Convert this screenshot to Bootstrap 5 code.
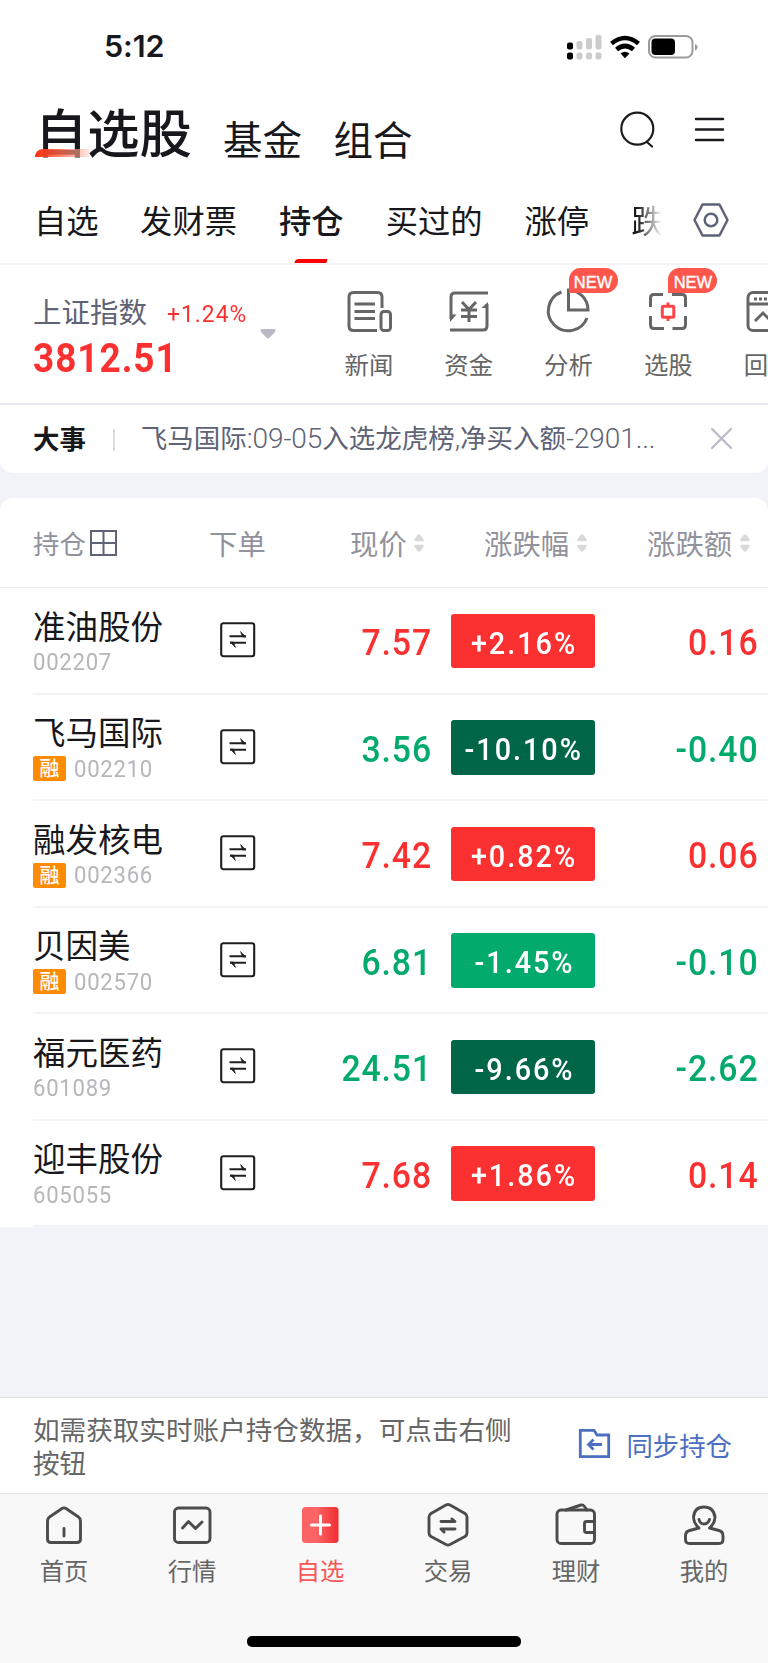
<!DOCTYPE html>
<html lang="zh-CN">
<head>
<meta charset="utf-8">
<meta name="viewport" content="width=device-width, initial-scale=1">
<title>自选股</title>
<link href="https://cdn.jsdelivr.net/npm/bootstrap@5.3.0/dist/css/bootstrap.min.css" rel="stylesheet">
<style>
  :root { --up:#fb3030; --down:#02aa6b; --deep:#006647; --ink:#18181c; --slate:#606375; --haze:#f2f3f8; }
  body { font-family:"Noto Sans CJK SC",sans-serif; background:var(--haze); color:var(--ink); width:768px; height:1663px; overflow:hidden; line-height:1; }
  svg { display:block; flex:none; fill:none; overflow:visible; }
  .num { font-family:Roboto,sans-serif; }
  .status { height:94px; padding:0 70px 0 104px; }
  .clock { font:600 30.5px/1 Inter,sans-serif; letter-spacing:-.1px; margin-top:-1px; }
  .titles { height:90px; padding:0 43px 0 35px; }
  .title-main { font-size:52.3px; font-weight:500; line-height:60px; }
  .title-main::before { content:""; position:absolute; left:0; top:49px; width:54px; height:8px; border-radius:8px 0 0 0; background:linear-gradient(90deg,#fa2c08,#ff6b50cc 50%,#ffd5cd88); z-index:1; }
  .title-sub { font-size:39.5px; line-height:46px; }
  .tabs { height:81px; padding:0 39px 0 34px; border-bottom:2px solid var(--haze); font-size:32.3px; }
  .tabs .on::after { content:""; position:absolute; left:16px; top:75px; width:32px; height:4px; background:red; border-radius:3px 1px 0 0; transform:skewX(-18deg); }
  .tab { height:79px; line-height:71px; white-space:nowrap; }
  .fade-tab { width:31px; overflow:hidden; -webkit-mask-image:linear-gradient(90deg,#000 20%,transparent); mask-image:linear-gradient(90deg,#000 20%,transparent); }
  .index-bar { height:140px; border-bottom:2px solid #e9e9f0; }
  .index-box { width:286px; padding:29px 0 0 33px; color:var(--slate); }
  .index-name { font-size:28.5px; line-height:34px; }
  .index-pct { font-size:24.8px; line-height:29px; color:var(--up); letter-spacing:1.1px; transform:scaleX(.92); transform-origin:left; }
  .index-val { font-size:41px; font-weight:700; line-height:44px; letter-spacing:1.1px; color:var(--up); margin-top:8px; transform:scaleX(.9); transform-origin:left; }
  .tool { width:99.8px; flex:none; padding-top:21px; color:#666; font-size:24.4px; }
  .tool svg { stroke:#666; stroke-width:3; }
  .tool div { margin-top:11px; line-height:34px; white-space:nowrap; }
  .new-tag { position:absolute; left:50px; top:3px; width:49px; height:25px; border-radius:12px 13px 13px 0; background:#ff564c; color:#fff; font:500 16.5px/28px "Liberation Sans",sans-serif; -webkit-text-stroke:.4px #fff; text-align:center; z-index:2; }
  .news { height:68px; padding:0 36px 2px 33px; border-radius:0 0 13px 13px; }
  .news strong { font-size:26.4px; font-weight:700; }
  .news .bar-v { width:2px; height:22px; background:#dcdce2; margin:3px 26px 0 27px; }
  .news-text { font-size:26.5px; color:var(--slate); width:545px; white-space:nowrap; }
  .news-text .num { font-size:28px; font-weight:300; letter-spacing:-.1px; }
  .holdings { margin-top:25px; border-radius:13px 13px 0 0; }
  .grid-row { display:grid; align-items:center; }
  .heads { height:90px; border-bottom:1px solid #e9e9ec; color:#92929d; font-size:28.4px; padding:1px 0 0 33px; }
  .heads.grid-row { grid-template-columns:176px 141px 134px 163px 145px; }
  .stock { height:106.5px; margin-left:33px; border-bottom:2px solid var(--haze); width:735px; grid-template-columns:187px 67px 144px 20px 144px 161px; }
  .stock-name { font-size:32.5px; line-height:38px; white-space:nowrap; margin-top:1px; }
  .code-line { height:27px; margin-top:5px; align-items:center; }
  .code { font-size:24.6px; line-height:28px; color:#b6b6bb; letter-spacing:.8px; transform:scaleX(.9); transform-origin:left; }
  .rong { width:33px; height:25px; background:#ff8b00; border-radius:2px; color:#fff; font-size:20px; font-weight:500; line-height:23px; text-align:center; margin-right:8px; }
  .price { font-size:37.5px; font-weight:500; letter-spacing:1px; text-align:right; padding-top:4px; line-height:44px; transform:scaleX(.9); transform-origin:right; margin-right:-1px; }
  .price.change { grid-column:6; margin-right:-2.5px; }
  .pill { grid-column:5; height:54.5px; line-height:59px; border-radius:3px; color:#fff; font-size:32px; font-weight:500; text-align:center; margin-top:1.5px; }
  .pill span { display:inline-block; letter-spacing:2.2px; margin-right:-2.2px; transform:scaleX(.9); white-space:nowrap; }
  .up { color:var(--up); } .down { color:var(--down); }
  .bg-up { background:var(--up); } .bg-down { background:var(--down); } .bg-deep { background:var(--deep); }
  .sync { height:96px; border-top:1px solid #e4e4e8; padding:0 36px 1px 33px; color:#666; font-size:26.6px; line-height:33.5px; }
  .sync-link { color:#4c6fbf; font-size:26.4px; }
  .dock { height:170px; background:#f8f8f8; border-top:1px solid #e2e2e4; }
  .dock-item { width:128px; padding-top:9px; color:#666; font-size:24.3px; }
  .dock-item svg { stroke:#4c4c4c; stroke-width:2.9; stroke-linejoin:round; stroke-linecap:round; }
  .dock-item div { line-height:34px; margin-top:4px; }
  .home-bar { width:274px; height:10.5px; border-radius:5px; background:#000; margin:49px auto 0; }
</style>
</head>
<body class="d-flex flex-column">
<svg width="0" height="0" class="position-absolute">
  <symbol id="swap" viewBox="0 0 36 36"><rect x="1.2" y="1.2" width="33" height="33" rx="2.2" stroke="#202024" stroke-width="2.1"/><path d="M9.500 14.300H26M10 20.800H26" stroke="#202024" stroke-width="2.100"/><path d="M20.500 9.500L26 15H22.500ZM15.500 25.500L10 20H13.500Z" fill="#202024" stroke="#202024" stroke-width=".6"/></symbol>
  <symbol id="sort" viewBox="0 0 10 18"><path d="M1 7.2Q-.4 6 .8 4.7L3.4 1.2Q5 -.6 6.600 1.200L9.200 4.700Q10.400 6 9 7.200ZM1 10.800Q-.4 12 .8 13.300L3.400 16.800Q5 18.600 6.600 16.800L9.200 13.300Q10.400 12 9 10.800Z" fill="#d9d9d9"/></symbol>
</svg>

<header class="bg-white">
  <div class="status d-flex align-items-center justify-content-between">
    <span class="clock">5:12</span>
    <svg width="131" height="26" viewBox="0 0 131 26">
      <g fill="#000"><rect x="0" y="8.500" width="6" height="7" rx="2"/><rect x="0" y="18.500" width="6" height="7" rx="2"/></g>
      <g fill="#ccc"><rect x="9.500" y="7" width="6" height="8.500" rx="2"/><rect x="19" y="4" width="6" height="11.500" rx="2"/><rect x="28.500" y="1" width="6" height="14.500" rx="2"/><rect x="9.500" y="18.500" width="6" height="7" rx="2"/><rect x="19" y="18.500" width="6" height="7" rx="2"/><rect x="28.500" y="18.500" width="6" height="7" rx="2"/></g>
      <path d="M44.500 9.500Q58 -1.500 71.500 9.500M49.500 15.500Q58 8.500 66.500 15.500" stroke="#000" stroke-width="4.600"/><path d="M53.500 19.500Q58 16 62.500 19.500L58 24.300Z" fill="#000"/>
      <rect x="82" y="2" width="43.500" height="21.500" rx="6.500" stroke="#9a9a9a" stroke-width="2"/><rect x="84.500" y="4.500" width="23.500" height="16.500" rx="4" fill="#000"/><path d="M128 10Q130.500 11 130.500 13.200T128 16.500Z" fill="#999"/>
    </svg>
  </div>
  <div class="titles d-flex">
    <div class="title-main position-relative" style="margin-top:5.500px">自选股</div>
    <div class="title-sub" style="margin:21px 0 0 31px">基金</div>
    <div class="title-sub" style="margin:21px 0 0 31.500px">组合</div>
    <svg class="ms-auto" style="margin-top:17px" width="36" height="38" viewBox="0 0 36 38" stroke="#1c1c20" stroke-width="2.200" stroke-linecap="round"><circle cx="17.300" cy="17.700" r="16"/><path d="M27 31L32 35.500"/></svg>
    <svg style="margin:23px 0 0 38px" width="31" height="26" viewBox="0 0 31 26" stroke="#1c1c20" stroke-width="2.500" stroke-linecap="round"><path d="M2 2H29M2 12.500H29M2 23H29"/></svg>
  </div>
  <nav class="tabs d-flex">
    <div class="tab">自选</div><div class="tab" style="margin-left:41.500px">发财票</div><div class="tab on position-relative" style="margin-left:42px;font-weight:500">持仓</div><div class="tab" style="margin-left:42px">买过的</div><div class="tab" style="margin-left:42px">涨停</div><div class="tab fade-tab" style="margin-left:42px">跌停</div>
    <svg class="ms-auto" style="margin-top:19px" width="36" height="34" viewBox="0 0 36 34" stroke="#606375" stroke-width="2.500" stroke-linejoin="round"><path d="M9.500 1.500H26.500L34.500 17L26.500 32.500H9.500L1.500 17Z"/><circle cx="18" cy="17" r="6.300"/></svg>
  </nav>
</header>

<section class="index-bar bg-white d-flex overflow-hidden position-relative">
  <div class="index-box flex-shrink-0">
    <div class="d-flex align-items-center"><span class="index-name">上证指数</span><span class="index-pct num" style="margin:5px 0 0 20px">+1.24%</span></div>
    <div class="d-flex"><div class="index-val num">3812.51</div><svg class="ms-auto" style="margin:.500px 10px 0 0" width="16" height="10" viewBox="0 0 16 10"><path d="M2 0H14Q17 1 14.500 3.500L9.500 8.800Q8 10.200 6.500 8.800L1.500 3.500Q-1 1 2 0Z" fill="#b9b9c8"/></svg></div>
  </div>
  <div class="d-flex text-center" style="margin-left:33px">
    <div class="tool d-flex flex-column align-items-center">
      <svg width="46" height="50" viewBox="0 0 46 50"><path d="M36 22V11Q36 6.500 31.500 6.500H7.500Q3 6.500 3 11V40Q3 44.500 7.500 44.500H31M8.500 18H29M8.500 25.500H29M8.500 32.500H29"/><rect x="35" y="25.500" width="9.500" height="19" rx="3"/></svg><div>新闻</div></div>
    <div class="tool d-flex flex-column align-items-center">
      <svg width="46" height="50" viewBox="0 0 46 50"><path d="M42 7H9Q5 7 5 11V33M4 44H37Q41 44 41 40V18M16 16L23 23.500L30 16M15 24H31M15 30.500H31M23 23V36"/><path d="M4 36V28.500H10.500ZM42 16V22H35.500Z" fill="#666" stroke="none"/></svg><div>资金</div></div>
    <div class="tool d-flex flex-column align-items-center position-relative">
      <span class="new-tag">NEW</span><svg width="46" height="50" viewBox="0 0 46 50"><path d="M16.500 6A20 20 0 1 0 42 32M23.500 4V24H43A20 20 0 0 0 23.500 4Z"/></svg><div>分析</div></div>
    <div class="tool d-flex flex-column align-items-center position-relative">
      <span class="new-tag">NEW</span><svg width="46" height="50" viewBox="0 0 46 50"><path d="M18 8.500H9Q5.500 8.500 5.500 12V21M5.500 30V38.500Q5.500 42.500 9 42.500H19M27.500 42.500H37Q40.500 42.500 40.500 38.500V30M40.500 21V12Q40.500 8.500 37 8.500H27"/><g stroke="#ff4545"><rect x="17.300" y="20.200" width="11.500" height="11" rx="1"/><path d="M23 16.500V20M23 31.500V35"/></g></svg><div>选股</div></div>
    <div class="tool d-flex flex-column align-items-center">
      <svg width="46" height="50" viewBox="0 0 46 50"><rect x="3" y="6.500" width="40" height="38" rx="5"/><path d="M3 18H43"/><path d="M9 13H31" stroke-dasharray="3 2"/><path d="M10 35L18 27L25 34L36 24"/></svg><div>回测</div></div>
  </div>
</section>

<section class="news bg-white d-flex align-items-center">
  <strong>大事</strong><span class="bar-v"></span>
  <div class="news-text">飞马国际<span class="num">:09-05</span>入选龙虎榜<span class="num">,</span>净买入额<span class="num">-2901...</span></div>
  <svg class="ms-auto" width="21" height="21" viewBox="0 0 21 21" stroke="#b9b9c8" stroke-width="2.200" stroke-linecap="round"><path d="M1 1L20 20M20 1L1 20"/></svg>
</section>

<main class="holdings bg-white">
  <div class="heads grid-row">
    <div class="d-flex align-items-center" style="font-size:26.400px">持仓<svg style="margin-left:4px" width="27" height="26" viewBox="0 0 27 26" stroke="#606375" stroke-width="2"><path d="M1 1H26V25H1ZM13.500 1V25M1 13H26"/></svg></div>
    <div>下单</div>
    <div class="d-flex align-items-center">现价<svg style="margin-left:7px" width="10" height="18"><use href="#sort"/></svg></div>
    <div class="d-flex align-items-center">涨跌幅<svg style="margin-left:7.500px" width="10" height="18"><use href="#sort"/></svg></div>
    <div class="d-flex align-items-center">涨跌额<svg style="margin-left:8px" width="10" height="18"><use href="#sort"/></svg></div>
  </div>
  <div class="stock grid-row"><div><div class="stock-name">准油股份</div><div class="code-line d-flex"><span class="code num">002207</span></div></div><svg width="36" height="36"><use href="#swap"/></svg><div class="price num up">7.57</div><div class="pill num bg-up"><span>+2.16%</span></div><div class="change price num up">0.16</div></div>
  <div class="stock grid-row"><div><div class="stock-name">飞马国际</div><div class="code-line d-flex"><span class="rong">融</span><span class="code num">002210</span></div></div><svg width="36" height="36"><use href="#swap"/></svg><div class="price num down">3.56</div><div class="pill num bg-deep"><span>-10.10%</span></div><div class="change price num down">-0.40</div></div>
  <div class="stock grid-row"><div><div class="stock-name">融发核电</div><div class="code-line d-flex"><span class="rong">融</span><span class="code num">002366</span></div></div><svg width="36" height="36"><use href="#swap"/></svg><div class="price num up">7.42</div><div class="pill num bg-up"><span>+0.82%</span></div><div class="change price num up">0.06</div></div>
  <div class="stock grid-row"><div><div class="stock-name">贝因美</div><div class="code-line d-flex"><span class="rong">融</span><span class="code num">002570</span></div></div><svg width="36" height="36"><use href="#swap"/></svg><div class="price num down">6.81</div><div class="pill num bg-down"><span>-1.45%</span></div><div class="change price num down">-0.10</div></div>
  <div class="stock grid-row"><div><div class="stock-name">福元医药</div><div class="code-line d-flex"><span class="code num">601089</span></div></div><svg width="36" height="36"><use href="#swap"/></svg><div class="price num down">24.51</div><div class="pill num bg-deep"><span>-9.66%</span></div><div class="change price num down">-2.62</div></div>
  <div class="stock grid-row"><div><div class="stock-name">迎丰股份</div><div class="code-line d-flex"><span class="code num">605055</span></div></div><svg width="36" height="36"><use href="#swap"/></svg><div class="price num up">7.68</div><div class="pill num bg-up"><span>+1.86%</span></div><div class="change price num up">0.14</div></div>
</main>

<footer class="mt-auto">
  <div class="sync bg-white d-flex align-items-center justify-content-between">
    <div style="width:490px">如需获取实时账户持仓数据，可点击右侧按钮</div>
    <div class="sync-link d-flex align-items-center"><svg style="margin-right:16px;margin-top:-4px" width="31" height="29" viewBox="0 0 31 29" stroke="#4c6fbf" stroke-width="2.800"><path d="M1.300 1.300H15L18 6H29.700V27.700H1.300Z"/><path d="M23 15.500H9M14.500 10.500L9.500 15.500L14.500 20.500"/></svg>同步持仓</div>
  </div>
  <nav class="dock">
    <div class="d-flex text-center">
      <div class="dock-item d-flex flex-column align-items-center"><svg width="44" height="46" viewBox="0 0 44 46"><path d="M5.500 18Q5.500 15.500 7.500 14L20 5.500Q22 4.300 24 5.500L36.500 14Q38.500 15.500 38.500 18V36Q38.500 39.500 35 39.500H9Q5.500 39.500 5.500 36ZM22 25.500V33"/></svg><div>首页</div></div>
      <div class="dock-item d-flex flex-column align-items-center"><svg width="44" height="46" viewBox="0 0 44 46"><rect x="4.500" y="5" width="35.500" height="34.500" rx="4"/><path d="M12.500 25L18.500 18.500L25.500 25.500L32 19"/></svg><div>行情</div></div>
      <div class="dock-item d-flex flex-column align-items-center" style="color:#fa5557"><svg width="44" height="46" viewBox="0 0 44 46"><defs><linearGradient id="hot"><stop offset=".4" stop-color="#fa6465"/><stop offset="1" stop-color="#ef2d2f"/></linearGradient></defs><rect x="4" y="4" width="36.500" height="36" rx="3.500" fill="url(#hot)" stroke="none"/><path d="M13.500 22H31.500M22.500 13V31" stroke="#fff" stroke-width="3"/></svg><div>自选</div></div>
      <div class="dock-item d-flex flex-column align-items-center"><svg width="44" height="46" viewBox="0 0 44 46"><path d="M20 2Q22 1 24 2L39 10.500Q41 12 41 14V30Q41 32 39 33.500L24 41.500Q22 42.500 20 41.500L5 33.500Q3 32 3 30V14Q3 12 5 10.500ZM15 18.500H29L26 16M29 26H15L18 29"/></svg><div>交易</div></div>
      <div class="dock-item d-flex flex-column align-items-center"><svg width="44" height="46" viewBox="0 0 44 46"><rect x="3" y="7" width="37.500" height="33.500" rx="4"/><path d="M40 18.500H32.500Q30.500 18.500 30.500 20.500V27.500Q30.500 29.500 32.500 29.500H40M12 7L27 2Q29 1.500 30.500 3.500L33 7"/></svg><div>理财</div></div>
      <div class="dock-item d-flex flex-column align-items-center"><svg width="44" height="46" viewBox="0 0 44 46"><path d="M17 25Q11.500 20 11.500 14Q12.500 4 22 4T33 14Q33 20 27.500 25L37 27.500Q41 28.500 41 33V36.500Q41 40.500 37 40.500H7.500Q3.500 40.500 3.500 36.500V33Q3.500 28.500 7.500 27.500ZM17 16.500Q18 21 22 21T27.500 16.500"/></svg><div>我的</div></div>
    </div>
    <div class="home-bar"></div>
  </nav>
</footer>
<script src="https://cdn.jsdelivr.net/npm/bootstrap@5.3.0/dist/js/bootstrap.bundle.min.js"></script>
</body>
</html>
